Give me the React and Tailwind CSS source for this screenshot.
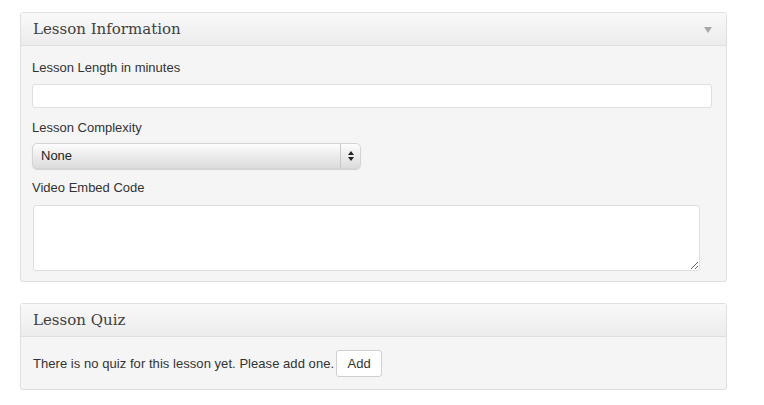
import React from 'react';

const serif = { fontFamily: '"DejaVu Serif", Georgia, serif' };

const PanelHeader = ({ title, arrow }) => (
    <div className="h-[33px] flex items-center justify-between pl-3 pr-3 border-b border-[#dfdfdf] bg-gradient-to-b from-[#f9f9f9] to-[#ececec]">
        <h3 className="text-[15px] text-[#3f3f3f]" style={serif}>{title}</h3>
        {arrow && <span className="w-0 h-0 border-l-[4px] border-r-[4px] border-t-[6px] border-l-transparent border-r-transparent border-t-[#a8a8a8] mr-[2px] mt-[2px]"></span>}
    </div>
);

const App = () => {
    return (
        <div className="bg-white min-h-[405px] pt-3 pl-5 text-[13px] text-[#333]" style={{ fontFamily: '"Liberation Sans", Arial, sans-serif' }}>
            <div className="w-[707px] border border-[#dfdfdf] rounded-[3px] bg-[#f5f5f5] shadow-[0_1px_0_#fff_inset]">
                <PanelHeader title="Lesson Information" arrow />
                <div className="pl-[11px] pb-[10px]">
                    <p className="mt-[13px] leading-[18px]">Lesson Length in minutes</p>
                    <input type="text" className="mt-[7px] block w-[680px] h-[24px] bg-white border border-[#dfdfdf] rounded-[3px] outline-none" />
                    <p className="mt-[11px] leading-[18px]">Lesson Complexity</p>
                    <div className="mt-[6px] w-[329px] h-[26px] flex items-center rounded-[5px] border border-[#d4d4d4] bg-gradient-to-b from-[#fdfdfd] via-[#ececec] to-[#dcdcdc] shadow-[0_1px_1px_rgba(0,0,0,0.15)]">
                        <span className="flex-1 pl-[8px] text-[13px] text-[#222]">None</span>
                        <span className="w-[20px] h-full border-l border-[#c8c8c8] flex flex-col items-center justify-center gap-[2px]">
                            <span className="w-0 h-0 border-l-[3px] border-r-[3px] border-b-[4px] border-l-transparent border-r-transparent border-b-[#222]"></span>
                            <span className="w-0 h-0 border-l-[3px] border-r-[3px] border-t-[4px] border-l-transparent border-r-transparent border-t-[#222]"></span>
                        </span>
                    </div>
                    <p className="mt-[10px] leading-[18px]">Video Embed Code</p>
                    <textarea className="mt-[8px] ml-[1px] block w-[667px] h-[66px] bg-white border border-[#dfdfdf] rounded-[3px] outline-none"></textarea>
                </div>
            </div>

            <div className="mt-[21px] w-[707px] border border-[#dfdfdf] rounded-[3px] bg-[#f5f5f5]">
                <PanelHeader title="Lesson Quiz" />
                <div className="pl-3 pt-[13px] pb-[12px] flex items-center">
                    <span className="tracking-[0.05px]">There is no quiz for this lesson yet. Please add one.</span>
                    <button className="ml-[2px] w-[46px] h-[27px] bg-white border border-[#cfcfcf] rounded-[3px] text-[13px] text-[#333]">Add</button>
                </div>
            </div>
        </div>
    );
};

export default App;
